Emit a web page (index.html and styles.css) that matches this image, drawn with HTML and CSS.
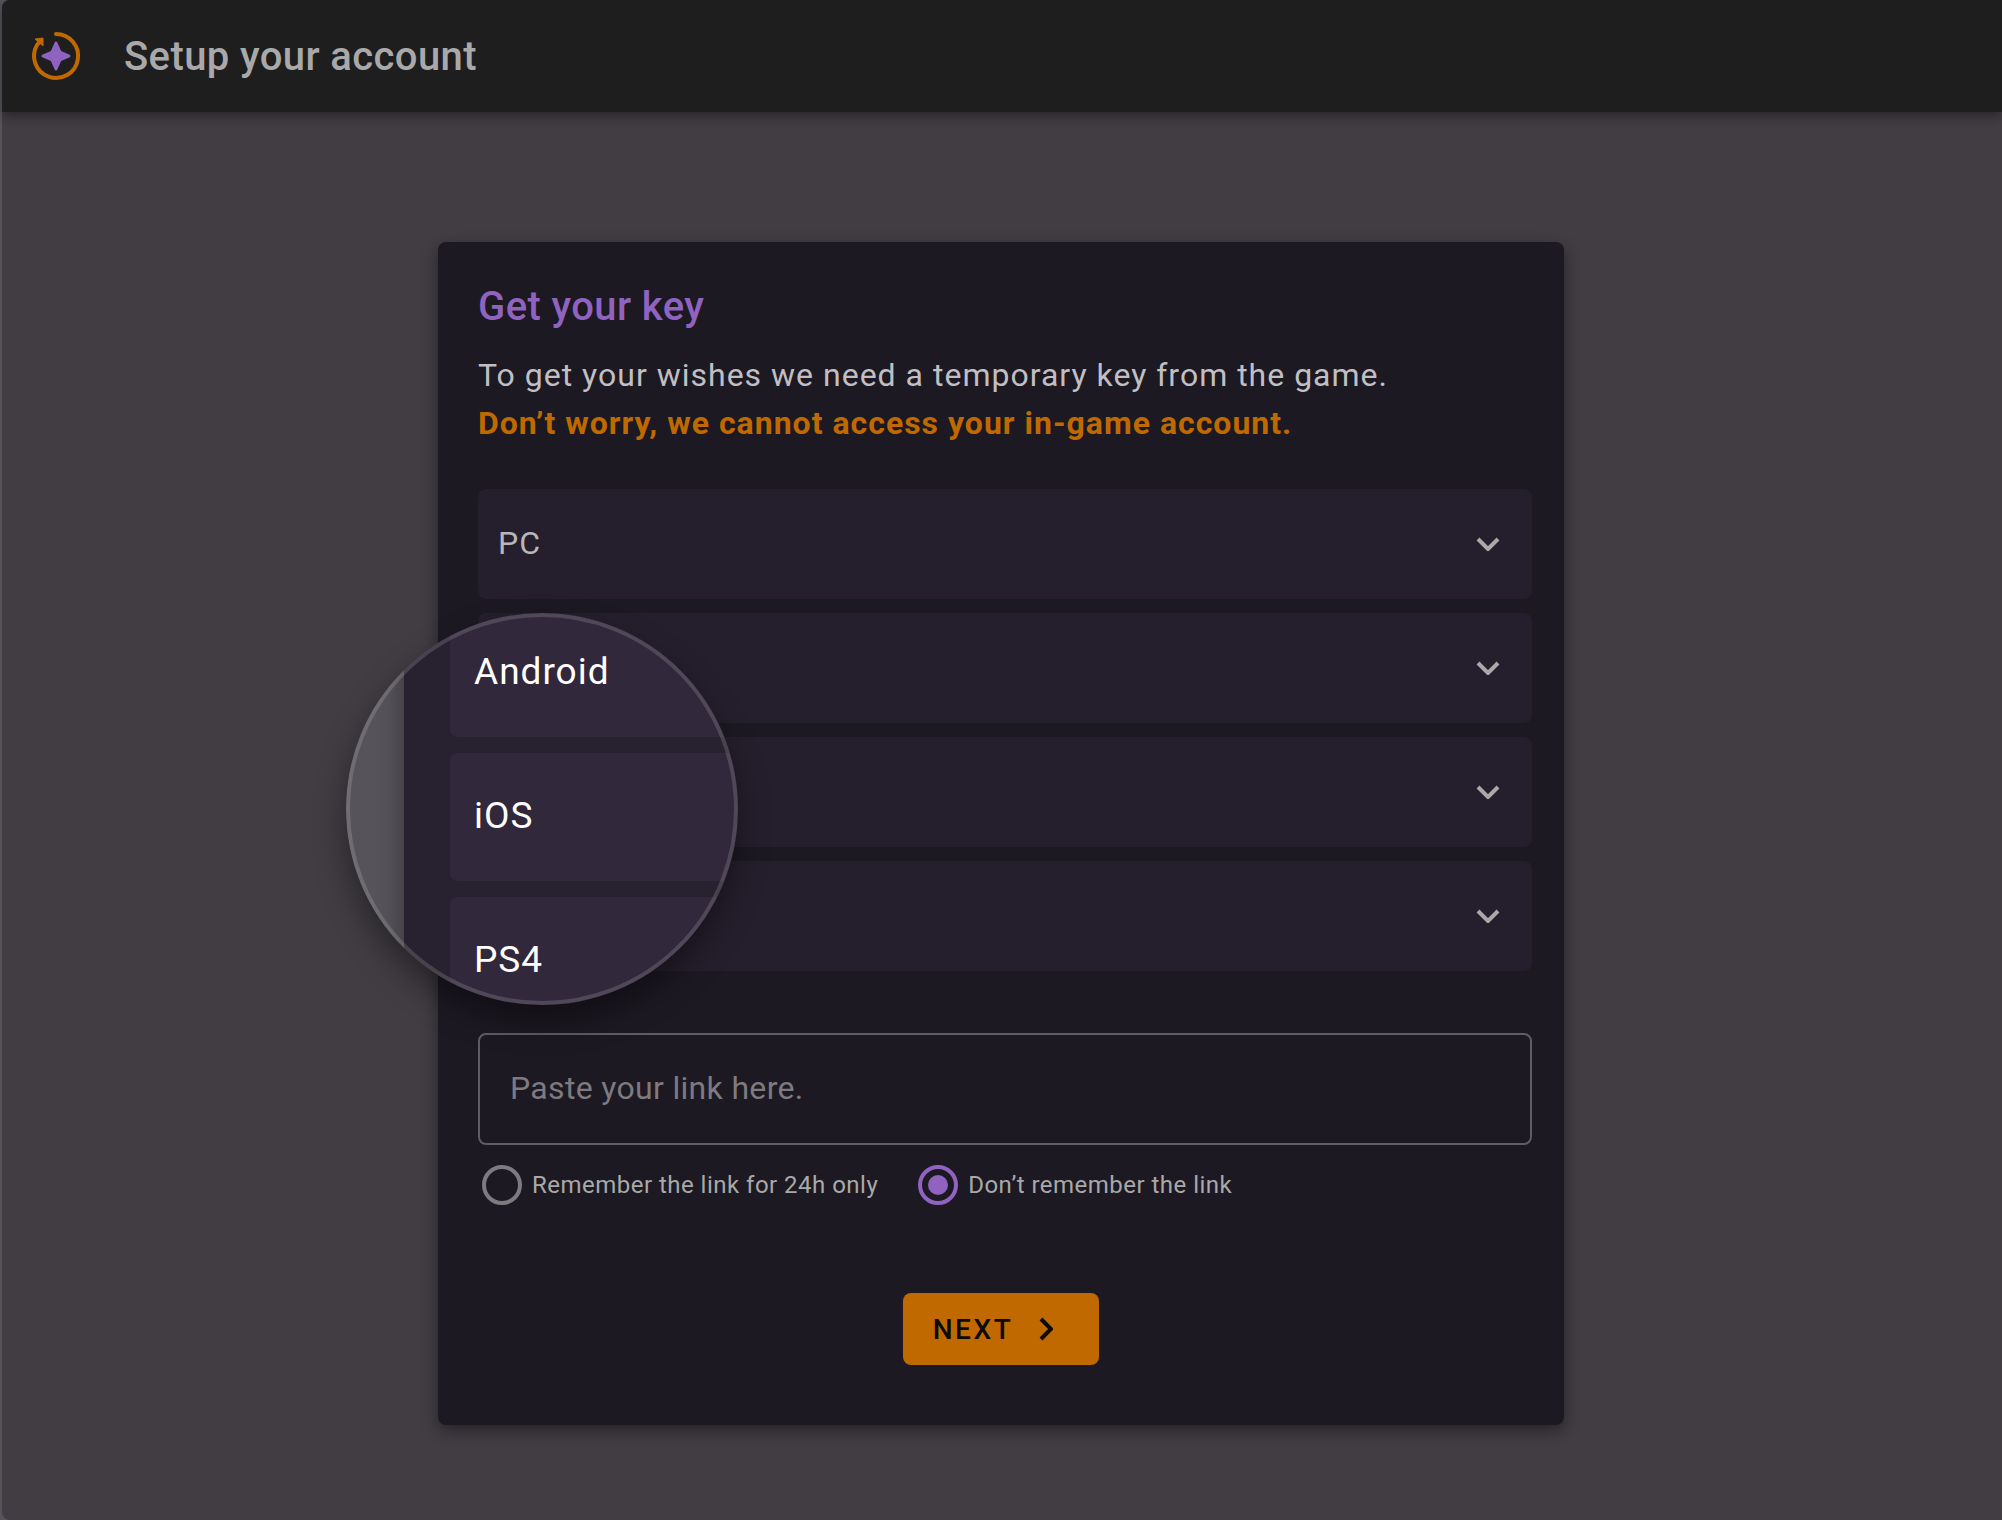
FILE: index.html
```html
<!DOCTYPE html>
<html lang="en">
<head>
<meta charset="utf-8">
<meta name="viewport" content="width=device-width, initial-scale=1">
<title>Setup your account</title>
<link rel="stylesheet" href="styles.css">
</head>
<body>
<div class="app">
  <header class="topbar">
    <svg class="logo" viewBox="0 0 48 48" aria-hidden="true">
      <path class="logo-ring" d="M24 2A22 22 0 1 1 5 13L8 9"/>
      <path class="logo-tip" d="M3 7L11 6L11 14Z"/>
      <path class="logo-star" d="M24 11L28 20L37 24L28 28L24 37L20 28L11 24L20 20Z"/>
    </svg>
    <h1 class="topbar-title">Setup your account</h1>
  </header>
  <main class="content">
    <form class="card">
      <h2 class="card-title">Get your key</h2>
      <p class="lead">To get your wishes we need a temporary key from the game.</p>
      <p class="lead notice">Don’t worry, we cannot access your in-game account.</p>

      <div class="platforms">
        <button class="platform" type="button"><span class="platform-name">PC</span><svg class="chevron" viewBox="0 0 24 14" aria-hidden="true"><path d="M2 2L12 12L22 2"/></svg></button>
        <button class="platform" type="button" aria-label="Android"><svg class="chevron" viewBox="0 0 24 14" aria-hidden="true"><path d="M2 2L12 12L22 2"/></svg></button>
        <button class="platform" type="button" aria-label="iOS"><svg class="chevron" viewBox="0 0 24 14" aria-hidden="true"><path d="M2 2L12 12L22 2"/></svg></button>
        <button class="platform" type="button" aria-label="PS4"><svg class="chevron" viewBox="0 0 24 14" aria-hidden="true"><path d="M2 2L12 12L22 2"/></svg></button>
        <div class="lens">
          <div class="lens-card">
            <div class="lens-row">Android</div>
            <div class="lens-row">iOS</div>
            <div class="lens-row">PS4</div>
          </div>
        </div>
      </div>

      <input class="link-input" type="text" placeholder="Paste your link here." aria-label="Link">
      <div class="choices">
        <label class="choice"><input type="radio" name="remember" value="day">Remember the link for 24h only</label>
        <label class="choice"><input type="radio" name="remember" value="no" checked>Don’t remember the link</label>
      </div>
      <button class="next" type="submit">NEXT<svg class="next-arrow" viewBox="0 0 14 24" aria-hidden="true"><path d="M2 2L12 12L2 22"/></svg></button>
    </form>
  </main>
</div>
</body>
</html>
```
FILE: styles.css
```css
* { box-sizing: border-box; }

body {
  margin: 0;
  background: #57535b;
  font-family: Roboto, "Liberation Sans", sans-serif;
  color: #c1bfc2;
}

h1, h2, p { margin: 0; }

.app {
  display: flex;
  flex-direction: column;
  min-height: 100vh;
  margin-left: 2px;
  background: #413d43;
  border-radius: 8px 0 0 8px;
}

.topbar {
  display: flex;
  align-items: center;
  gap: 44px;
  height: 112px;
  padding: 0 30px;
  background: #1e1e1e;
  border-radius: 8px 0 0 0;
  box-shadow: 0 4px 12px rgba(0, 0, 0, 0.4);
}

.topbar-title {
  padding-top: 2px;
  font-size: 40px;
  line-height: 48px;
  font-weight: 500;
  letter-spacing: 0.01em;
  color: #a9a9a9;
}

.logo { width: 48px; height: 48px; overflow: visible; }
.logo-ring { fill: none; stroke: #bf6900; stroke-width: 4; stroke-linecap: round; }
.logo-tip { fill: #bf6900; stroke: #bf6900; stroke-width: 1; stroke-linejoin: round; }
.logo-star { fill: #8f63bf; stroke: #8f63bf; stroke-width: 3; stroke-linejoin: round; }

.content {
  display: flex;
  justify-content: center;
  padding: 130px 32px 94px 30px;
}

.card {
  display: flex;
  flex-direction: column;
  width: 100%;
  max-width: 1126px;
  padding: 41px 32px 60px 40px;
  background: #1c1922;
  border-radius: 8px;
  box-shadow: 0 6px 16px rgba(0, 0, 0, 0.4);
}

.card-title {
  margin-bottom: 20px;
  font-size: 40px;
  line-height: 48px;
  font-weight: 500;
  letter-spacing: 0.01em;
  color: #8f63bf;
}

.lead { font-size: 32px; line-height: 48px; letter-spacing: 1px; }
.notice { font-weight: 700; color: #bf6900; }

.platforms {
  position: relative;
  display: flex;
  flex-direction: column;
  gap: 14px;
  margin: 42px 0 62px;
}

.platform {
  display: flex;
  align-items: center;
  height: 110px;
  padding: 0 32px 0 20px;
  border: 0;
  border-radius: 8px;
  background: #251f2d;
  color: #b8b6b9;
  font: inherit;
  font-size: 32px;
  letter-spacing: 1px;
}

.platform-name { padding-bottom: 2px; }

.chevron { width: 24px; height: 14px; margin-left: auto; }
.chevron path { fill: none; stroke: #a9a9a9; stroke-width: 4; }

/* Magnifier over the left ends of the platform rows */
.lens {
  position: absolute;
  left: -132px;
  top: 124px;
  width: 392px;
  height: 392px;
  padding-left: 58px;
  overflow: hidden;
  border-radius: 50%;
  background: #57535b;
  box-shadow: 0 16px 32px rgba(0, 0, 0, 0.4);
}

.lens::after {
  content: "";
  position: absolute;
  inset: 0;
  border: 4px solid rgba(255, 255, 255, 0.15);
  border-radius: 50%;
}

.lens-card {
  display: flex;
  flex-direction: column;
  justify-content: center;
  gap: 16px;
  height: 100%;
  padding-left: 46px;
  padding-top: 16px;
  background: #272130;
  box-shadow: 0 4px 24px rgba(0, 0, 0, 0.4);
}

.lens-row {
  flex: none;
  height: 128px;
  padding-left: 24px;
  border-radius: 8px;
  background: #32283c;
  color: #fff;
  font-size: 37px;
  line-height: 126px;
  letter-spacing: 1px;
}

.link-input {
  height: 112px;
  padding: 0 30px 2px;
  border: 2px solid #5f5c62;
  border-radius: 8px;
  background: transparent;
  color: #c1bfc2;
  font: inherit;
  font-size: 32px;
  letter-spacing: 0.01em;
}

.link-input::placeholder { color: #7e7a80; opacity: 1; }

.choices {
  display: flex;
  flex-wrap: wrap;
  gap: 40px;
  margin: 20px 0 88px;
  padding-left: 4px;
}

.choice {
  display: flex;
  align-items: center;
  gap: 10px;
  font-size: 24px;
  line-height: 32px;
  letter-spacing: 0.02em;
  color: #a9a9a9;
}

.choice input {
  appearance: none;
  width: 40px;
  height: 40px;
  margin: 0;
  border: 4px solid #7e7a80;
  border-radius: 50%;
}

.choice input:checked {
  padding: 6px;
  border-color: #8f63bf;
}

.choice input:checked::before {
  content: "";
  display: block;
  height: 100%;
  border-radius: 50%;
  background: #8f63bf;
}

.next {
  display: flex;
  align-items: center;
  align-self: center;
  gap: 26px;
  height: 72px;
  margin-right: 8px;
  padding: 0 46px 0 30px;
  border: 0;
  border-radius: 8px;
  background: #bf6900;
  color: #0c0a0e;
  font: inherit;
  font-size: 28px;
  font-weight: 500;
  letter-spacing: 0.09em;
}

.next-arrow { width: 14px; height: 24px; }
.next-arrow path { fill: none; stroke: #0c0a0e; stroke-width: 4; }
```
